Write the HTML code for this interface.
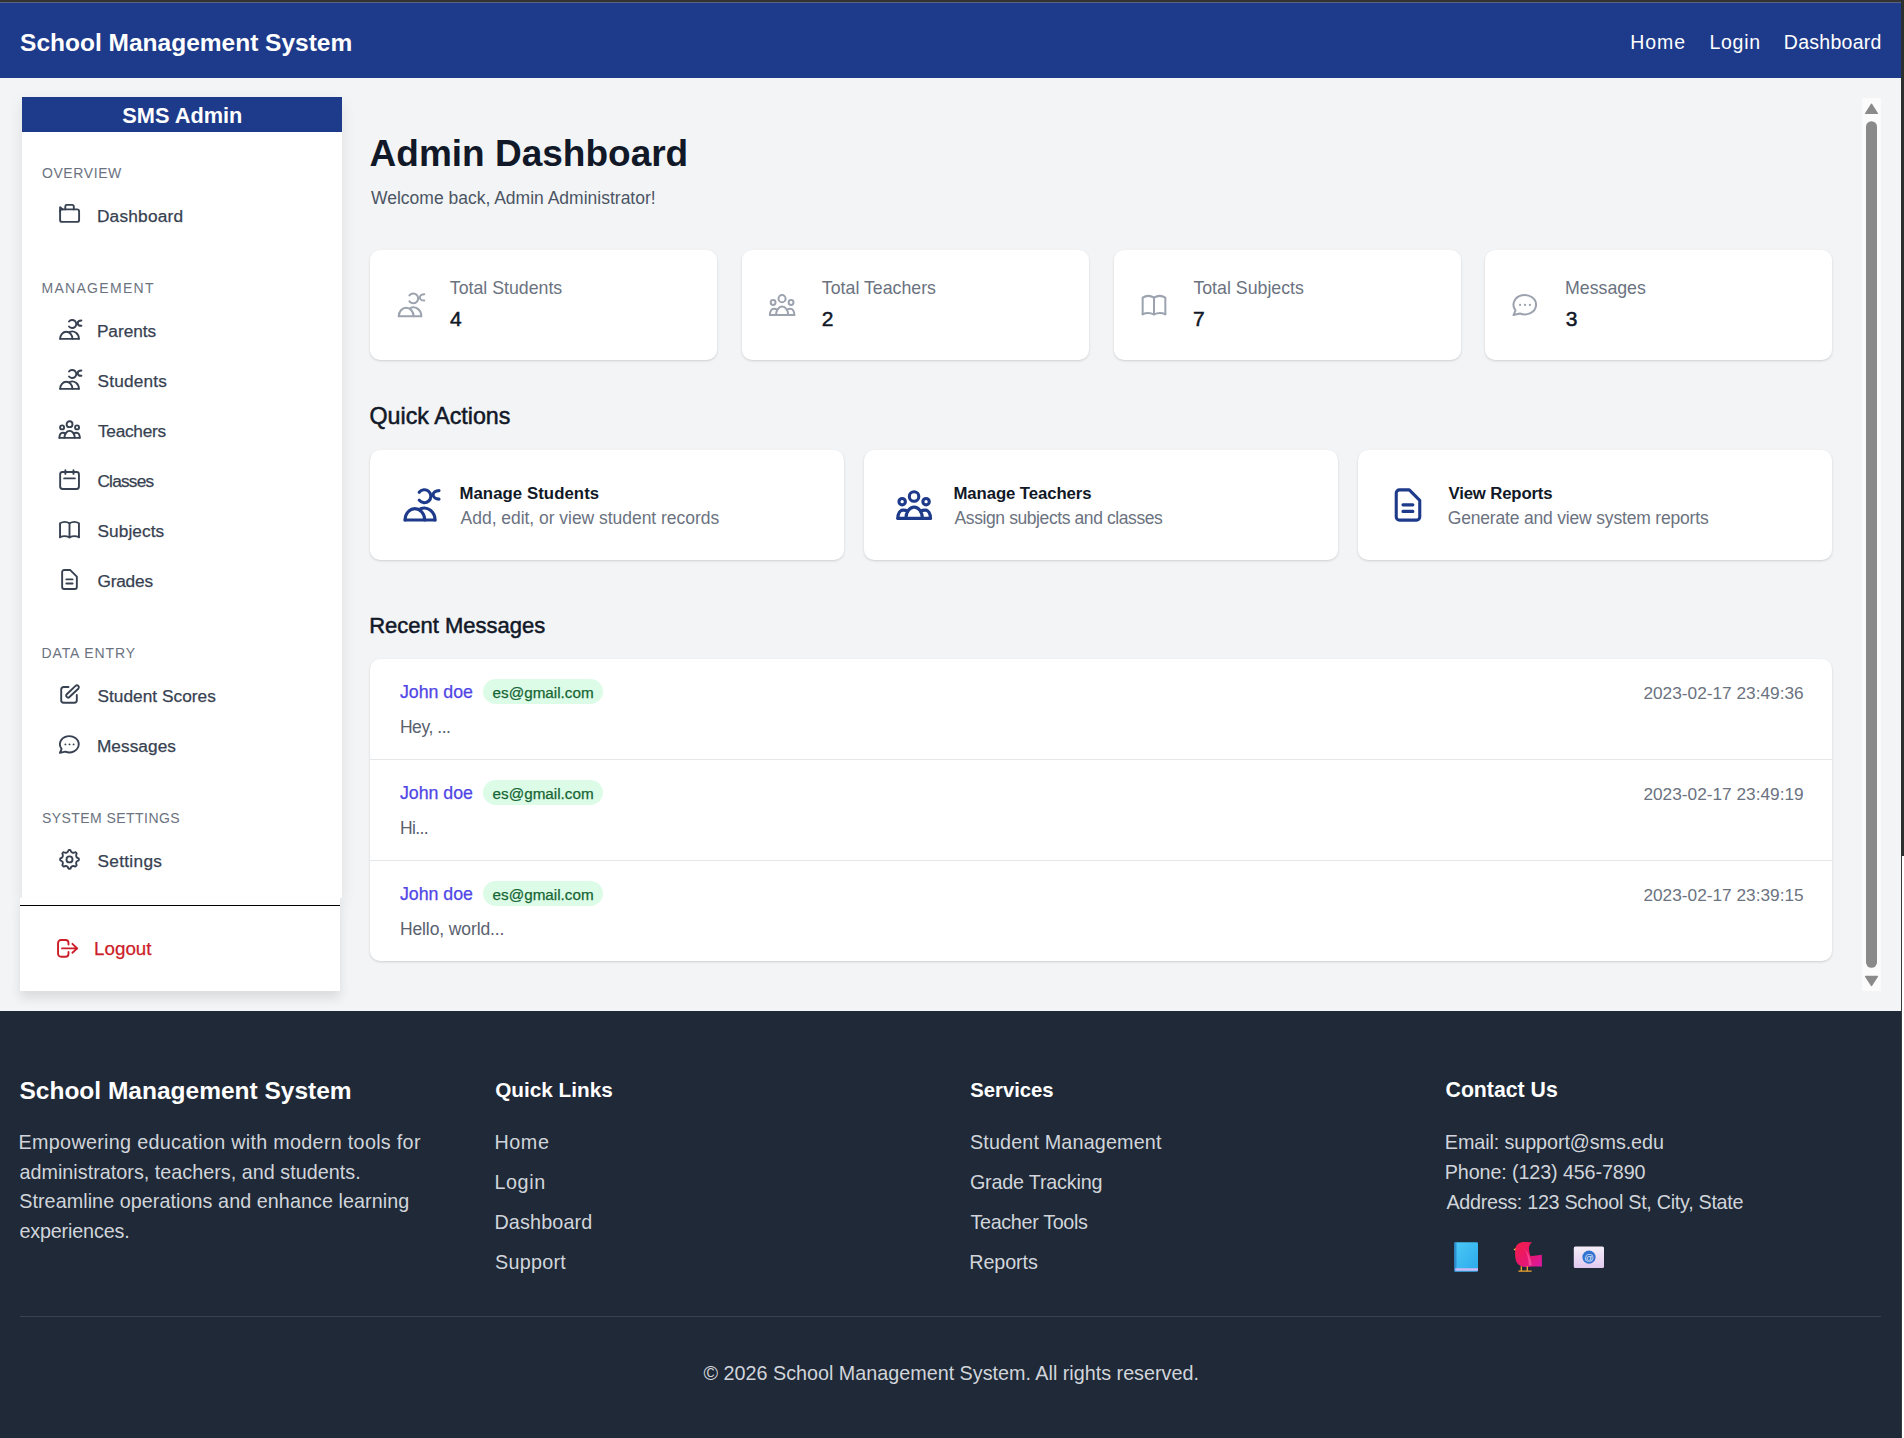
<!DOCTYPE html>
<html lang="en"><head><meta charset="utf-8"><title>School Management System - Admin Dashboard</title>
<style>
*{box-sizing:border-box;margin:0;padding:0}
html,body{width:1904px;height:1438px;overflow:hidden;background:#fff}
body{position:relative;font-family:"Liberation Sans",sans-serif}
span,a,h1,h2,h3,p,b{position:absolute;white-space:nowrap;text-decoration:none;font-weight:400}
ul{list-style:none}
.ic{position:absolute;overflow:visible}
.abs{position:absolute}
.med{-webkit-text-stroke:0.25px currentColor}
.semi{-webkit-text-stroke:0.5px currentColor}
.card{background:#fff;border-radius:10px;box-shadow:0 1px 3px rgba(0,0,0,0.10),0 1px 2px rgba(0,0,0,0.06)}

</style></head><body>
<div class="abs" style="left:0;top:0;width:1904px;height:2px;background:#333333"></div>
<div class="abs" style="left:0;top:2px;width:1904px;height:1px;background:#5b6382"></div>
<header class="abs" style="left:0;top:3px;width:1901px;height:75px;background:#1e3a8a">
<a style="left:20.07px;top:27.96px;font-size:24.5px;line-height:24.5px;color:#fff;font-weight:700;">School Management System</a>
<nav>
<a style="left:1630.24px;top:29.99px;font-size:19.5px;line-height:19.5px;color:#fff;letter-spacing:0.963px;">Home</a>
<a style="left:1709.44px;top:29.99px;font-size:19.5px;line-height:19.5px;color:#fff;letter-spacing:0.748px;">Login</a>
<a style="left:1783.84px;top:29.99px;font-size:19.5px;line-height:19.5px;color:#fff;letter-spacing:0.276px;">Dashboard</a>
</nav></header>
<main class="abs" style="left:0;top:78px;width:1901px;height:933px;background:#f3f4f6"></main>
<aside class="abs" style="left:22px;top:97px;width:320px;height:800.5px;background:#fff;box-shadow:0 6px 14px rgba(0,0,0,0.09)">
<div class="abs" style="left:0;top:0;width:320px;height:34.5px;background:#1e3a8a"></div>
<h2 style="left:100.35px;top:8.28px;font-size:21.75px;line-height:21.75px;color:#fff;font-weight:700;">SMS Admin</h2>
<h3 style="left:19.90px;top:69.45px;font-size:14px;line-height:14px;color:#6b7280;letter-spacing:0.6px;">OVERVIEW</h3>
<h3 style="left:19.48px;top:184.45px;font-size:14px;line-height:14px;color:#6b7280;letter-spacing:1.3px;">MANAGEMENT</h3>
<h3 style="left:19.48px;top:549.45px;font-size:14px;line-height:14px;color:#6b7280;letter-spacing:0.9px;">DATA ENTRY</h3>
<h3 style="left:19.90px;top:714.45px;font-size:14px;line-height:14px;color:#6b7280;letter-spacing:0.45px;">SYSTEM SETTINGS</h3>
<ul>
<li>
<a class="med" style="left:74.92px;top:110.79px;font-size:17.25px;line-height:17.25px;color:#374151;letter-spacing:0.236px;">Dashboard</a>
<svg class="ic" style="left:35.00px;top:104.00px;width:24.00px;height:24.00px;color:#374151" viewBox="0 0 24 24" fill="none" stroke="currentColor" stroke-width="1.900" stroke-linecap="round" stroke-linejoin="round"><rect x="3.1" y="8.4" width="19" height="12.5" rx="2"/><path d="M8.3 8.4V5.4a1.5 1.5 0 0 1 1.5-1.5h5.5a1.5 1.5 0 0 1 1.5 1.5v3"/><path d="M3.1 10.5V6.2l2.6 2.2"/></svg>
</li>
<li>
<a class="med" style="left:74.92px;top:225.79px;font-size:17.25px;line-height:17.25px;color:#374151;letter-spacing:-0.041px;">Parents</a>
<svg class="ic" style="left:35.00px;top:220.00px;width:24.00px;height:24.00px;color:#374151" viewBox="0 0 24 24" fill="none" stroke="currentColor" stroke-width="1.900" stroke-linecap="round" stroke-linejoin="round"><path d="M3.15 21.85H21.9"/><path d="M3.15 21.85A6.15 7.05 0 0 1 15.45 21.85"/><path d="M12.9 14.85A6.7 7.45 0 0 1 21.9 21.85"/><path d="M12.0 4.55A4.05 4.05 0 1 1 12.0 9.45"/><path d="M24.4 3.5A3.7 2.65 0 0 0 24.4 8.8"/></svg>
</li>
<li>
<a class="med" style="left:75.44px;top:275.69px;font-size:17.25px;line-height:17.25px;color:#374151;letter-spacing:0.2px;">Students</a>
<svg class="ic" style="left:35.00px;top:269.90px;width:24.00px;height:24.00px;color:#374151" viewBox="0 0 24 24" fill="none" stroke="currentColor" stroke-width="1.900" stroke-linecap="round" stroke-linejoin="round"><path d="M3.15 21.85H21.9"/><path d="M3.15 21.85A6.15 7.05 0 0 1 15.45 21.85"/><path d="M12.9 14.85A6.7 7.45 0 0 1 21.9 21.85"/><path d="M12.0 4.55A4.05 4.05 0 1 1 12.0 9.45"/><path d="M24.4 3.5A3.7 2.65 0 0 0 24.4 8.8"/></svg>
</li>
<li>
<a class="med" style="left:75.95px;top:325.59px;font-size:17.25px;line-height:17.25px;color:#374151;letter-spacing:-0.261px;">Teachers</a>
<svg class="ic" style="left:35.00px;top:319.80px;width:24.00px;height:24.00px;color:#374151" viewBox="0 0 24 24" fill="none" stroke="currentColor" stroke-width="1.900" stroke-linecap="round" stroke-linejoin="round"><circle cx="12.55" cy="7.2" r="2.95"/><circle cx="5.1" cy="10.4" r="2.0"/><circle cx="20.05" cy="10.4" r="2.0"/><path d="M2.4 20.85H22.8"/><path d="M7.45 20.85A5.15 7.0 0 0 1 17.75 20.85"/><path d="M2.4 20.85C2.4 17.6 3.7 15.7 5.7 15.7C6.9 15.7 7.9 16 8.6 16.45"/><path d="M22.8 20.85C22.8 17.6 21.5 15.7 19.5 15.7C18.3 15.7 17.3 16 16.6 16.45"/></svg>
</li>
<li>
<a class="med" style="left:75.44px;top:375.69px;font-size:17.25px;line-height:17.25px;color:#374151;letter-spacing:-0.777px;">Classes</a>
<svg class="ic" style="left:35.00px;top:369.90px;width:24.00px;height:24.00px;color:#374151" viewBox="0 0 24 24" fill="none" stroke="currentColor" stroke-width="1.900" stroke-linecap="round" stroke-linejoin="round"><rect x="3.15" y="5.05" width="18.8" height="16.9" rx="2.4"/><path d="M8.4 3.15V6.9M16.5 3.15V6.9M7.15 11.4H17.85"/></svg>
</li>
<li>
<a class="med" style="left:75.44px;top:425.59px;font-size:17.25px;line-height:17.25px;color:#374151;letter-spacing:0.089px;">Subjects</a>
<svg class="ic" style="left:35.00px;top:419.80px;width:24.00px;height:24.00px;color:#374151" viewBox="0 0 24 24" fill="none" stroke="currentColor" stroke-width="1.900" stroke-linecap="round" stroke-linejoin="round"><path d="M3.05 20.3V6.3Q7.75 3.5 12.5 6.3Q17.25 3.5 21.95 6.3V20.3"/><path d="M12.5 6.3V20.4"/><path d="M3.05 20.2Q7.75 18 12.5 20.4Q17.25 18 21.95 20.2"/></svg>
</li>
<li>
<a class="med" style="left:75.44px;top:475.69px;font-size:17.25px;line-height:17.25px;color:#374151;letter-spacing:-0.196px;">Grades</a>
<svg class="ic" style="left:35.00px;top:469.90px;width:24.00px;height:24.00px;color:#374151" viewBox="0 0 24 24" fill="none" stroke="currentColor" stroke-width="1.900" stroke-linecap="round" stroke-linejoin="round"><path d="M7.15 3.05H13.3L19.85 9.6V19.95A2 2 0 0 1 17.85 21.95H7.15A2 2 0 0 1 5.15 19.95V5.05A2 2 0 0 1 7.15 3.05Z"/><path d="M9.35 12.4H15.55M9.35 16.5H15.55"/></svg>
</li>
<li>
<a class="med" style="left:75.44px;top:590.79px;font-size:17.25px;line-height:17.25px;color:#374151;letter-spacing:0.034px;">Student Scores</a>
<svg class="ic" style="left:35.00px;top:585.00px;width:24.00px;height:24.00px;color:#374151" viewBox="0 0 24 24" fill="none" stroke="currentColor" stroke-width="1.900" stroke-linecap="round" stroke-linejoin="round"><path d="M11.5 5H6.7A2.5 2.5 0 0 0 4.2 7.5V18.3A2.5 2.5 0 0 0 6.7 20.8H17.3A2.5 2.5 0 0 0 19.8 18.3V13"/><rect x="-8" y="-1.95" width="16" height="3.9" rx="1.95" transform="translate(15.5 9.45) rotate(-43.5)"/></svg>
</li>
<li>
<a class="med" style="left:74.92px;top:640.79px;font-size:17.25px;line-height:17.25px;color:#374151;letter-spacing:0.055px;">Messages</a>
<svg class="ic" style="left:35.00px;top:635.00px;width:24.00px;height:24.00px;color:#374151" viewBox="0 0 24 24" fill="none" stroke="currentColor" stroke-width="1.900" stroke-linecap="round" stroke-linejoin="round"><path d="M4.6 16.9L2.9 20.9L8.3 19.6A9.4 8.1 0 1 0 4.6 16.9Z"/><circle cx="8.4" cy="12.4" r="0.95" fill="currentColor" stroke="none"/><circle cx="12.5" cy="12.4" r="0.95" fill="currentColor" stroke="none"/><circle cx="16.6" cy="12.4" r="0.95" fill="currentColor" stroke="none"/></svg>
</li>
<li>
<a class="med" style="left:75.44px;top:755.79px;font-size:17.25px;line-height:17.25px;color:#374151;letter-spacing:0.308px;">Settings</a>
<svg class="ic" style="left:35.00px;top:750.00px;width:24.00px;height:24.00px;color:#374151" viewBox="0 0 24 24" fill="none" stroke="currentColor" stroke-width="1.900" stroke-linecap="round" stroke-linejoin="round"><path d="M11.58 3.20 Q12.50 2.80 13.42 3.20 Q14.74 7.00 18.36 5.24 Q19.29 5.61 19.66 6.54 Q17.90 10.16 21.70 11.48 Q22.10 12.40 21.70 13.32 Q17.90 14.64 19.66 18.26 Q19.29 19.19 18.36 19.56 Q14.74 17.80 13.42 21.60 Q12.50 22.00 11.58 21.60 Q10.26 17.80 6.64 19.56 Q5.71 19.19 5.34 18.26 Q7.10 14.64 3.30 13.32 Q2.90 12.40 3.30 11.48 Q7.10 10.16 5.34 6.54 Q5.71 5.61 6.64 5.24 Q10.26 7.00 11.58 3.20 Z"/><circle cx="12.5" cy="12.4" r="3.0"/></svg>
</li>
</ul></aside>
<div class="abs" style="left:20px;top:897.5px;width:320px;height:93.5px;background:#fff;box-shadow:0 7px 10px rgba(0,0,0,0.10)">
<div class="abs" style="left:0;top:7px;width:320px;height:1.7px;background:#000"></div>
<a class="med" style="left:74.10px;top:42.92px;font-size:18.75px;line-height:18.75px;color:#cc1d28;">Logout</a>
<svg class="ic" style="left:35.00px;top:38.50px;width:24.00px;height:24.00px;color:#cc1d28" viewBox="0 0 24 24" fill="none" stroke="currentColor" stroke-width="1.900" stroke-linecap="round" stroke-linejoin="round"><path d="M13.5 8.6V7A3 3 0 0 0 10.5 4H6.05A3 3 0 0 0 3.05 7V17.8A3 3 0 0 0 6.05 20.8H10.5A3 3 0 0 0 13.5 17.8V16"/><path d="M7 12.4H22.2M17.4 7.85L22.2 12.4L17.4 16.8"/></svg>
</div>
<h1 style="left:369.59px;top:135.47px;font-size:37px;line-height:37px;color:#111827;font-weight:700;">Admin Dashboard</h1>
<p style="left:371.00px;top:190.38px;font-size:17.5px;line-height:17.5px;color:#4b5563;">Welcome back, Admin Administrator!</p>
<div class="abs card" style="left:369.8px;top:249.8px;width:347.4px;height:110px"></div>
<p style="left:449.75px;top:280.37px;font-size:17.75px;line-height:17.75px;color:#6b7280;">Total Students</p>
<p class="semi" style="left:450.08px;top:308.32px;font-size:21px;line-height:21px;color:#111827;">4</p>
<svg class="ic" style="left:394.90px;top:290.10px;width:28.80px;height:28.80px;color:#9ca3af" viewBox="0 0 24 24" fill="none" stroke="currentColor" stroke-width="1.667" stroke-linecap="round" stroke-linejoin="round"><path d="M3.15 21.85H21.9"/><path d="M3.15 21.85A6.15 7.05 0 0 1 15.45 21.85"/><path d="M12.9 14.85A6.7 7.45 0 0 1 21.9 21.85"/><path d="M12.0 4.55A4.05 4.05 0 1 1 12.0 9.45"/><path d="M24.4 3.5A3.7 2.65 0 0 0 24.4 8.8"/></svg>
<div class="abs card" style="left:741.7px;top:249.8px;width:347.4px;height:110px"></div>
<p style="left:821.85px;top:280.37px;font-size:17.75px;line-height:17.75px;color:#6b7280;">Total Teachers</p>
<p class="semi" style="left:821.65px;top:308.32px;font-size:21px;line-height:21px;color:#111827;">2</p>
<svg class="ic" style="left:766.80px;top:290.10px;width:28.80px;height:28.80px;color:#9ca3af" viewBox="0 0 24 24" fill="none" stroke="currentColor" stroke-width="1.667" stroke-linecap="round" stroke-linejoin="round"><circle cx="12.55" cy="7.2" r="2.95"/><circle cx="5.1" cy="10.4" r="2.0"/><circle cx="20.05" cy="10.4" r="2.0"/><path d="M2.4 20.85H22.8"/><path d="M7.45 20.85A5.15 7.0 0 0 1 17.75 20.85"/><path d="M2.4 20.85C2.4 17.6 3.7 15.7 5.7 15.7C6.9 15.7 7.9 16 8.6 16.45"/><path d="M22.8 20.85C22.8 17.6 21.5 15.7 19.5 15.7C18.3 15.7 17.3 16 16.6 16.45"/></svg>
<div class="abs card" style="left:1113.7px;top:249.8px;width:347.4px;height:110px"></div>
<p style="left:1193.39px;top:280.37px;font-size:17.75px;line-height:17.75px;color:#6b7280;">Total Subjects</p>
<p class="semi" style="left:1192.95px;top:308.32px;font-size:21px;line-height:21px;color:#111827;">7</p>
<svg class="ic" style="left:1138.80px;top:290.10px;width:28.80px;height:28.80px;color:#9ca3af" viewBox="0 0 24 24" fill="none" stroke="currentColor" stroke-width="1.667" stroke-linecap="round" stroke-linejoin="round"><path d="M3.05 20.3V6.3Q7.75 3.5 12.5 6.3Q17.25 3.5 21.95 6.3V20.3"/><path d="M12.5 6.3V20.4"/><path d="M3.05 20.2Q7.75 18 12.5 20.4Q17.25 18 21.95 20.2"/></svg>
<div class="abs card" style="left:1484.7px;top:249.8px;width:347.4px;height:110px"></div>
<p style="left:1564.98px;top:280.37px;font-size:17.75px;line-height:17.75px;color:#6b7280;">Messages</p>
<p class="semi" style="left:1565.86px;top:308.32px;font-size:21px;line-height:21px;color:#111827;">3</p>
<svg class="ic" style="left:1509.80px;top:290.10px;width:28.80px;height:28.80px;color:#9ca3af" viewBox="0 0 24 24" fill="none" stroke="currentColor" stroke-width="1.667" stroke-linecap="round" stroke-linejoin="round"><path d="M4.6 16.9L2.9 20.9L8.3 19.6A9.4 8.1 0 1 0 4.6 16.9Z"/><circle cx="8.4" cy="12.4" r="0.95" fill="currentColor" stroke="none"/><circle cx="12.5" cy="12.4" r="0.95" fill="currentColor" stroke="none"/><circle cx="16.6" cy="12.4" r="0.95" fill="currentColor" stroke="none"/></svg>
<h2 class="semi" style="left:369.54px;top:405.01px;font-size:23.25px;line-height:23.25px;color:#111827;">Quick Actions</h2>
<div class="abs card" style="left:370px;top:449.5px;width:474px;height:110.8px"></div>
<h3 style="left:459.43px;top:485.82px;font-size:16.75px;line-height:16.75px;color:#111827;letter-spacing:0.073px;font-weight:700;">Manage Students</h3>
<p style="left:460.60px;top:510.18px;font-size:17.5px;line-height:17.5px;color:#6b7280;letter-spacing:-0.035px;">Add, edit, or view student records</p>
<svg class="ic" style="left:399.80px;top:484.90px;width:38.40px;height:38.40px;color:#1e3a8a" viewBox="0 0 24 24" fill="none" stroke="currentColor" stroke-width="1.938" stroke-linecap="round" stroke-linejoin="round"><path d="M3.15 21.85H21.9"/><path d="M3.15 21.85A6.15 7.05 0 0 1 15.45 21.85"/><path d="M12.9 14.85A6.7 7.45 0 0 1 21.9 21.85"/><path d="M12.0 4.55A4.05 4.05 0 1 1 12.0 9.45"/><path d="M24.4 3.5A3.7 2.65 0 0 0 24.4 8.8"/></svg>
<div class="abs card" style="left:864px;top:449.5px;width:474px;height:110.8px"></div>
<h3 style="left:953.43px;top:485.82px;font-size:16.75px;line-height:16.75px;color:#111827;letter-spacing:-0.082px;font-weight:700;">Manage Teachers</h3>
<p style="left:954.60px;top:510.18px;font-size:17.5px;line-height:17.5px;color:#6b7280;letter-spacing:-0.408px;">Assign subjects and classes</p>
<svg class="ic" style="left:893.80px;top:484.90px;width:38.40px;height:38.40px;color:#1e3a8a" viewBox="0 0 24 24" fill="none" stroke="currentColor" stroke-width="1.938" stroke-linecap="round" stroke-linejoin="round"><circle cx="12.55" cy="7.2" r="2.95"/><circle cx="5.1" cy="10.4" r="2.0"/><circle cx="20.05" cy="10.4" r="2.0"/><path d="M2.4 20.85H22.8"/><path d="M7.45 20.85A5.15 7.0 0 0 1 17.75 20.85"/><path d="M2.4 20.85C2.4 17.6 3.7 15.7 5.7 15.7C6.9 15.7 7.9 16 8.6 16.45"/><path d="M22.8 20.85C22.8 17.6 21.5 15.7 19.5 15.7C18.3 15.7 17.3 16 16.6 16.45"/></svg>
<div class="abs card" style="left:1358px;top:449.5px;width:474px;height:110.8px"></div>
<h3 style="left:1448.43px;top:485.82px;font-size:16.75px;line-height:16.75px;color:#111827;letter-spacing:-0.148px;font-weight:700;">View Reports</h3>
<p style="left:1447.72px;top:510.18px;font-size:17.5px;line-height:17.5px;color:#6b7280;letter-spacing:-0.18px;">Generate and view system reports</p>
<svg class="ic" style="left:1387.80px;top:484.90px;width:38.40px;height:38.40px;color:#1e3a8a" viewBox="0 0 24 24" fill="none" stroke="currentColor" stroke-width="1.938" stroke-linecap="round" stroke-linejoin="round"><path d="M7.15 3.05H13.3L19.85 9.6V19.95A2 2 0 0 1 17.85 21.95H7.15A2 2 0 0 1 5.15 19.95V5.05A2 2 0 0 1 7.15 3.05Z"/><path d="M9.35 12.4H15.55M9.35 16.5H15.55"/></svg>
<h2 class="semi" style="left:369.14px;top:615.07px;font-size:22px;line-height:22px;color:#111827;">Recent Messages</h2>
<div class="abs card" style="left:370px;top:659px;width:1462px;height:302px"></div>
<b class="med" style="left:399.94px;top:684.17px;font-size:17.75px;line-height:17.75px;color:#4f46e5;">John doe</b>
<div class="abs" style="left:483px;top:679px;width:120.2px;height:25px;border-radius:13px;background:#dcfce7"></div>
<span class="med" style="left:492.59px;top:684.89px;font-size:15.25px;line-height:15.25px;color:#166534;">es@gmail.com</span>
<p style="left:399.90px;top:719.48px;font-size:17.5px;line-height:17.5px;color:#59616e;letter-spacing:-0.439px;">Hey, ...</p>
<span style="left:1643.44px;top:684.79px;font-size:17.25px;line-height:17.25px;color:#6b7280;">2023-02-17 23:49:36</span>
<div class="abs" style="left:370px;top:759px;width:1462px;height:1px;background:#e5e7eb"></div>
<b class="med" style="left:399.94px;top:785.17px;font-size:17.75px;line-height:17.75px;color:#4f46e5;">John doe</b>
<div class="abs" style="left:483px;top:780px;width:120.2px;height:25px;border-radius:13px;background:#dcfce7"></div>
<span class="med" style="left:492.59px;top:785.89px;font-size:15.25px;line-height:15.25px;color:#166534;">es@gmail.com</span>
<p style="left:399.90px;top:820.48px;font-size:17.5px;line-height:17.5px;color:#59616e;letter-spacing:-0.588px;">Hi...</p>
<span style="left:1643.44px;top:785.79px;font-size:17.25px;line-height:17.25px;color:#6b7280;">2023-02-17 23:49:19</span>
<div class="abs" style="left:370px;top:860px;width:1462px;height:1px;background:#e5e7eb"></div>
<b class="med" style="left:399.94px;top:886.17px;font-size:17.75px;line-height:17.75px;color:#4f46e5;">John doe</b>
<div class="abs" style="left:483px;top:881px;width:120.2px;height:25px;border-radius:13px;background:#dcfce7"></div>
<span class="med" style="left:492.59px;top:886.89px;font-size:15.25px;line-height:15.25px;color:#166534;">es@gmail.com</span>
<p style="left:399.90px;top:921.48px;font-size:17.5px;line-height:17.5px;color:#59616e;letter-spacing:-0.103px;">Hello, world...</p>
<span style="left:1643.44px;top:886.79px;font-size:17.25px;line-height:17.25px;color:#6b7280;">2023-02-17 23:39:15</span>
<div class="abs" style="left:1862px;top:98px;width:19px;height:893px;background:#fbfbfb"></div>
<svg class="abs" style="left:1862px;top:98px" width="19" height="893" viewBox="0 0 19 893"><path d="M9.5 6.2 L15.5 15.5 L3.5 15.5 Z" fill="#8a8a8a" stroke="#8a8a8a" stroke-width="1.2" stroke-linejoin="round"/><rect x="4" y="23.2" width="11" height="846.6" rx="5.5" fill="#8a8a8a"/><path d="M3.5 878.4 L15.5 878.4 L9.5 887.6 Z" fill="#8a8a8a" stroke="#8a8a8a" stroke-width="1.2" stroke-linejoin="round"/></svg>
<div class="abs" style="left:1901px;top:0;width:3px;height:856px;background:#2d2f2e"></div>
<div class="abs" style="left:1901px;top:856px;width:1px;height:582px;background:#3a3a3a"></div>
<footer class="abs" style="left:0;top:1011px;width:1901px;height:427px;background:#1f2937">
<h3 style="left:19.46px;top:67.86px;font-size:24.5px;line-height:24.5px;color:#fff;font-weight:700;">School Management System</h3>
<p style="left:18.62px;top:121.98px;font-size:19.75px;line-height:19.75px;color:#d1d5db;letter-spacing:0.296px;">Empowering education with modern tools for</p>
<p style="left:19.41px;top:151.73px;font-size:19.75px;line-height:19.75px;color:#d1d5db;letter-spacing:0.025px;">administrators, teachers, and students.</p>
<p style="left:19.21px;top:181.48px;font-size:19.75px;line-height:19.75px;color:#d1d5db;letter-spacing:0.058px;">Streamline operations and enhance learning</p>
<p style="left:19.41px;top:211.23px;font-size:19.75px;line-height:19.75px;color:#d1d5db;letter-spacing:-0.155px;">experiences.</p>
<h3 style="left:495.17px;top:69.03px;font-size:20.75px;line-height:20.75px;color:#fff;font-weight:700;">Quick Links</h3>
<a style="left:494.42px;top:121.68px;font-size:19.75px;line-height:19.75px;color:#d1d5db;letter-spacing:0.594px;">Home</a>
<a style="left:494.42px;top:161.85px;font-size:19.75px;line-height:19.75px;color:#d1d5db;letter-spacing:0.61px;">Login</a>
<a style="left:494.42px;top:202.02px;font-size:19.75px;line-height:19.75px;color:#d1d5db;letter-spacing:0.156px;">Dashboard</a>
<a style="left:495.01px;top:242.19px;font-size:19.75px;line-height:19.75px;color:#d1d5db;letter-spacing:0.267px;">Support</a>
<h3 style="left:970.29px;top:69.45px;font-size:20.25px;line-height:20.25px;color:#fff;font-weight:700;">Services</h3>
<a style="left:969.91px;top:121.68px;font-size:19.75px;line-height:19.75px;color:#d1d5db;letter-spacing:0.16px;">Student Management</a>
<a style="left:969.91px;top:161.85px;font-size:19.75px;line-height:19.75px;color:#d1d5db;letter-spacing:-0.193px;">Grade Tracking</a>
<a style="left:970.50px;top:202.02px;font-size:19.75px;line-height:19.75px;color:#d1d5db;letter-spacing:-0.34px;">Teacher Tools</a>
<a style="left:969.32px;top:242.19px;font-size:19.75px;line-height:19.75px;color:#d1d5db;letter-spacing:-0.116px;">Reports</a>
<h3 style="left:1445.55px;top:68.61px;font-size:21.25px;line-height:21.25px;color:#fff;font-weight:700;">Contact Us</h3>
<p style="left:1444.82px;top:121.68px;font-size:19.75px;line-height:19.75px;color:#d1d5db;letter-spacing:-0.089px;">Email: support@sms.edu</p>
<p style="left:1444.82px;top:151.68px;font-size:19.75px;line-height:19.75px;color:#d1d5db;letter-spacing:-0.124px;">Phone: (123) 456-7890</p>
<p style="left:1446.40px;top:181.68px;font-size:19.75px;line-height:19.75px;color:#d1d5db;letter-spacing:-0.292px;">Address: 123 School St, City, State</p>
<svg class="abs" style="left:1452px;top:229px" width="30" height="34" viewBox="0 0 30 34"><defs><linearGradient id="bk" x1="0" y1="0" x2="1" y2="1"><stop offset="0" stop-color="#4cc9f5"/><stop offset="1" stop-color="#2aa9ec"/></linearGradient></defs><rect x="2.5" y="2.3" width="23.5" height="29.4" rx="1.2" fill="url(#bk)"/><rect x="2.5" y="2.3" width="2" height="29.4" fill="#2f8fd6"/><rect x="3.3" y="28.2" width="22.7" height="2.6" fill="#c7b8f5"/></svg>
<svg class="abs" style="left:1511px;top:229px" width="34" height="34" viewBox="0 0 34 34"><defs><linearGradient id="bd" x1="0" y1="0" x2="1" y2="1"><stop offset="0" stop-color="#f31d45"/><stop offset="0.55" stop-color="#e8176f"/><stop offset="1" stop-color="#d41aa6"/></linearGradient></defs><path d="M5.6 7.6 L2.4 9.6 L5.6 11.6 Z" fill="#f5b73b"/><path d="M4.6 7.5C6 3.5 10 1.8 14 2C17 2.1 19.5 2.2 21.2 2.3C19 3.8 17.8 6 18 9C18.2 12.5 19 15 19.6 16.3L30.8 14.8L31 26.6L20 26.6C14 28 8 26.5 5.5 22C3.8 18.5 3.8 12 4.6 7.5Z" fill="url(#bd)"/><path d="M12.5 8C15.5 11 17.5 17 17.8 25.5L21 25.5C20 19 17.5 12 12.5 8Z" fill="#ff6aa8" opacity="0.55"/><path d="M10.3 26.2V30.8M16.3 26.2V30.8M7.4 31.2H20.6" stroke="#f0a830" stroke-width="1.3"/></svg>
<svg class="abs" style="left:1572px;top:233px" width="34" height="26" viewBox="0 0 34 26"><defs><linearGradient id="ev" x1="0" y1="0" x2="0" y2="1"><stop offset="0" stop-color="#f3eef8"/><stop offset="1" stop-color="#e2c9ef"/></linearGradient></defs><rect x="1.8" y="2.5" width="30.2" height="21.5" rx="1.5" fill="url(#ev)"/><circle cx="17" cy="13.2" r="6.6" fill="#3474d0"/><text x="17" y="16.6" text-anchor="middle" font-family="Liberation Sans" font-size="9.5" fill="#e6ecf8">@</text></svg>
<div class="abs" style="left:20px;top:305px;width:1861px;height:1px;background:#374151"></div>
<p style="left:703.50px;top:352.98px;font-size:19.75px;line-height:19.75px;color:#d1d5db;">© 2026 School Management System. All rights reserved.</p>
</footer>
</body></html>
